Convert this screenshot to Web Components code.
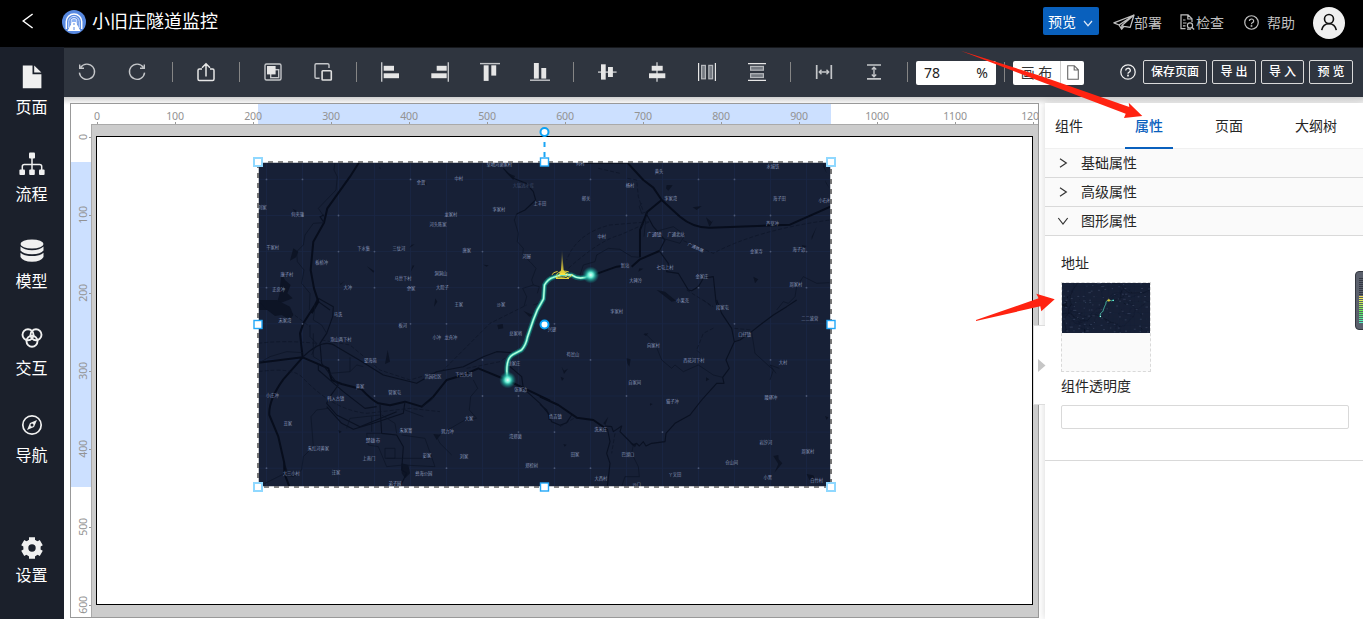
<!DOCTYPE html>
<html lang="zh-CN">
<head>
<meta charset="utf-8">
<title>小旧庄隧道监控</title>
<style>
html,body{margin:0;height:100%;overflow:hidden;background:#fff}
body{font-family:"Noto Sans","Noto Sans CJK SC",sans-serif;font-size:14px;color:#262626}
</style>
</head>
<body>
<editor-app></editor-app>
<script>
const define = (name, html) => customElements.define(name, class extends HTMLElement {
  constructor() {
    super();
    const t = document.createElement('template');
    t.innerHTML = typeof html === 'function' ? html(this) : html;
    this.attachShadow({mode: 'open'}).append(t.content.cloneNode(true));
  }
});

/* toolbar icons, drawn round the origin */
const S = 'fill="none" stroke="#c4c6c9" stroke-width="1.4"';
const r = (x, y, w, h) => `<rect x="${x}" y="${y}" width="${w}" height="${h}" fill="#e6e6e6"/>`;
const o = (x, y, w, h) => `<rect x="${x}" y="${y}" width="${w}" height="${h}" fill="#747981" stroke="#b4b7bb" stroke-width="1.2"/>`;
const l = (d, c = '#c4c6c9', w = 1.4) => `<path d="${d}" fill="none" stroke="${c}" stroke-width="${w}"/>`;
const ICONS = {
  undo: l('M-6.3 -4.6A7.6 7.6 0 1 1 -7.6 .6M-7.3 -7.4V-3.8H-3'),
  redo: l('M6.3 -4.6A7.6 7.6 0 1 0 7.6 .6M7.3 -7.4V-3.8H3'),
  share: l('M-4 -3H-6.6Q-8 -3 -8 -1.6V7Q-8 8.5 -6.6 8.5H6.6Q8 8.5 8 7V-1.6Q8 -3 6.6 -3H4M0 4.5V-8M-4 -4.2L0 -8.2L4 -4.2', '#e6e6e6', 1.5),
  front: `<rect x="-8" y="-8" width="16" height="16" rx="1.5" ${S}/><rect x="-2.3" y="-2.3" width="8" height="8" ${S}/>${r(-6, -6, 8.6, 8.4)}`,
  back: l('M-3.4 6.3H-6.8Q-8 6.3 -8 5V-7Q-8 -8.2 -6.8 -8.2H4.6Q6 -8.2 6 -7V-4') + `<rect x="-.9" y="-1.2" width="9.2" height="9.2" rx=".8" fill="none" stroke="#e0e0e0" stroke-width="1.6"/>`,
  left: l('M-8.3 -9.7V9.7') + r(-6.3, -6.2, 10.3, 4.9) + r(-6.3, 1.3, 15.3, 4.9),
  right: l('M8.3 -9.7V9.7') + r(-3.3, -6.2, 10, 4.9) + r(-8.7, 1.3, 15.4, 4.9),
  top: l('M-10 -8.4H10') + r(-6.3, -6.7, 4.9, 15.6) + r(1.3, -6.7, 4.9, 10.3),
  bottom: l('M-10 8.2H10') + r(-6.1, -9, 4.9, 15.6) + r(1.3, -4, 4.9, 10.6),
  middle: l('M-9 .1H9.6') + r(-6, -7.7, 4.7, 15.3) + r(1, -5, 4.9, 10),
  center: l('M0 -9.7V9.7') + r(-5.3, -6.2, 11, 4.9) + r(-8, 1.3, 16.3, 4.9),
  hspace: l('M-8.4 -9V9M8.4 -9V9', '#e6e6e6', 1.2) + o(-5.4, -6.6, 3.8, 13.4) + o(1.8, -6.6, 3.8, 13.4),
  vspace: l('M-9 -8.4H9M-9 8.4H9', '#e6e6e6', 1.2) + o(-6.4, -5.6, 12.8, 3.8) + o(-6.4, 1.7, 12.8, 3.8),
  width: l('M-7.3 -7V7M7.3 -7V7', '#c4c6c9', 1.7) + l('M-4.6 0H4.6M-2.5 -2.2L-4.7 0L-2.5 2.2M2.5 -2.2L4.7 0L2.5 2.2'),
  height: l('M-7 -7H7M-7 6.8H7', '#c4c6c9', 1.7) + l('M0 -4.6V4.6M-2.2 -2.5L0 -4.7L2.2 -2.5M-2.2 2.5L0 4.7L2.2 2.5')
};
define('tool-icon', el => `<style>:host{display:block;width:50px;height:24px;flex:none}svg{display:block}</style>
<svg width="50" height="24" viewBox="-25 -12 50 24">${ICONS[el.getAttribute('name')] || ''}</svg>`);
define('tool-sep', `<style>:host{display:block;width:17px;height:20px;flex:none;background:linear-gradient(#858585,#858585) 8px 0/1px 100% no-repeat}</style>`);
define('tool-button', `<style>:host{display:block;box-sizing:border-box;height:24px;border:1px solid #d9d9d9;border-radius:2px;color:#fff;font-size:12px;font-weight:500;line-height:21px;text-align:center;white-space:nowrap;margin-right:5px}</style><slot></slot>`);

define('help-icon', `<style>:host{display:block;flex:none}svg{display:block}</style>
<svg width="100%" viewBox="0 0 16 16" fill="none" stroke="currentColor" stroke-width="1.3"><circle cx="8" cy="8" r="7.2"/><path d="M5.7 6.4A2.3 2.1 0 1 1 8.9 8.3Q8 8.7 8 9.8"/><circle cx="8" cy="11.6" r=".4"/></svg>`);

define('tool-bar', `<style>
:host{display:flex;align-items:center;height:50px;background:#2f353f;box-shadow:inset 0 1px #16181c;padding-left:0}
.first{margin-left:-2px}.sep0{margin:0 0 0 2px}
.num{display:flex;align-items:center;justify-content:space-between;box-sizing:border-box;width:80px;height:24px;padding:0 8px;background:#fff;border-radius:2px;margin-top:1px;font-size:14px;color:#222}
.cv{display:flex;box-sizing:border-box;width:71px;height:24px;background:#fff;border-radius:2px;margin-top:1px;color:#333}
.cv span{width:48px;border-right:1px solid #ccc;text-align:center;line-height:23px;white-space:pre;box-sizing:border-box}
.cv svg{margin:4px auto 0}
help-icon{width:16px;margin:0 7px 0 36px;color:#eee}
</style>
<tool-icon class="first" name="undo"></tool-icon><tool-icon name="redo"></tool-icon><tool-sep class="sep0"></tool-sep>
<tool-icon name="share"></tool-icon><tool-sep></tool-sep>
<tool-icon name="front"></tool-icon><tool-icon name="back"></tool-icon><tool-sep></tool-sep>
<tool-icon name="left"></tool-icon><tool-icon name="right"></tool-icon><tool-icon name="top"></tool-icon><tool-icon name="bottom"></tool-icon><tool-sep></tool-sep>
<tool-icon name="middle"></tool-icon><tool-icon name="center"></tool-icon><tool-icon name="hspace"></tool-icon><tool-icon name="vspace"></tool-icon><tool-sep></tool-sep>
<tool-icon name="width"></tool-icon><tool-icon name="height"></tool-icon><tool-sep></tool-sep>
<div class="num"><span>78</span><span>%</span></div><tool-sep></tool-sep>
<div class="cv"><span>画 布</span><svg width="12" height="15" viewBox="0 0 12 15" fill="none" stroke="#666" stroke-width="1.1"><path d="M.7.7H7.3L11.3 4.8V14.2H.7ZM7.2 .8V5H11.2"/></svg></div>
<help-icon></help-icon>
<tool-button style="width:64px">保存页面</tool-button><tool-button style="width:44px">导 出</tool-button><tool-button style="width:43px">导 入</tool-button><tool-button style="width:44px">预 览</tool-button>`);

define('app-header', `<style>
:host{display:flex;align-items:center;height:47px;background:#000;color:#bfbfbf;box-sizing:border-box;padding-bottom:3px}
svg{display:block;flex:none}
h1{margin:0 auto 2px 6px;font-size:18px;font-weight:400;color:#fff;line-height:24px;white-space:nowrap}
.pre{display:flex;align-items:center;box-sizing:border-box;width:56px;height:28px;padding:2px 5px 0;background:#0960bd;border-radius:2px;color:#fff;margin:-2px 14px 0 0}
.pre svg{margin:3px 0 0 7px}
span{white-space:nowrap;line-height:20px}
.av{margin:2px 18px 0 18px}
</style>
<svg style="margin:-2px 0 0 22px" width="12" height="16" viewBox="0 0 12 16" fill="none" stroke="#fff" stroke-width="1.5"><path d="M10.6 1L1.2 8L10.6 15"/></svg>
<svg style="margin-left:28px" width="24" height="24" viewBox="0 0 24 24"><circle cx="12" cy="12" r="12" fill="#5889e0"/><path d="M4.3 19V11.5A7.7 7.5 0 0 1 19.7 11.5V19" fill="none" stroke="#fff" stroke-width="1.5"/><path d="M6.8 18V11.7A5.2 5.3 0 0 1 17.2 11.7V18" fill="none" stroke="#d8e5ff" stroke-width="1"/><path d="M9.2 14V9.5Q12 6.8 14.8 9.5V14Z" fill="#8fb4f5" stroke="#fff" stroke-width=".8"/><path d="M10.2 12H13.8L18.5 21H5.5Z" fill="#fff"/><path d="M12 13V15M12 17V20" stroke="#5889e0" stroke-width="1"/></svg>
<h1>小旧庄隧道监控</h1>
<div class="pre"><span>预览</span><svg width="10" height="7" viewBox="0 0 10 7" fill="none" stroke="#dce8f7" stroke-width="1.2"><path d="M1 1L5 5.7L9 1"/></svg></div>
<svg width="22" height="16" viewBox="0 0 22 16" fill="none" stroke="#bfbfbf" stroke-width="1.3" stroke-linejoin="round"><path d="M21 1L.9 8.8L6 11L8.7 15.2L11 12.4L17.2 13.4ZM21 1L6 11M21 1L8.8 11.6V15M8.8 11.6L11 12.4"/></svg>
<span style="margin:1px 0 0 -1px">部署</span>
<svg style="margin-left:18px" width="15" height="16" viewBox="0 0 15 16" fill="none" stroke="#bfbfbf" stroke-width="1.2"><path d="M5.5 14.6H1V.8H8L12 4.8V8M7.8 1V5H12M3 6H5.5M3 9H6.5M3 11.8H5.5"/><circle cx="10" cy="11.4" r="2.6"/><path d="M11.8 13.2L14.2 15.5M7 15.2H11"/></svg>
<span style="margin:1px 0 0 1px">检查</span>
<help-icon style="width:15px;margin-left:20px"></help-icon>
<span style="margin:1px 0 0 8px">帮助</span>
<svg class="av" width="32" height="32" viewBox="0 0 32 32"><circle cx="16" cy="16" r="16" fill="#f0f0f0"/><g fill="none" stroke="#111" stroke-width="1.6"><circle cx="16" cy="12" r="4.5"/><path d="M8.7 23.2Q10 16.7 16 16.7T23.3 23.2"/></g></svg>`);

const NAV = {
  page: '<path d="M4.8 2.4H14.5V11.2H23.4V25.2H4.8Z" fill="#f0f0f0"/><path d="M16.2 2.4L23.4 9.6H16.2Z" fill="#f0f0f0"/>',
  flow: '<path d="M14 6V22M4.3 21V16.5Q4.3 14.4 6.4 14.4H21.6Q23.7 14.4 23.7 16.5V21" fill="none" stroke="#f0f0f0" stroke-width="1.5"/><g fill="#f0f0f0"><rect x="11" y="2.4" width="6" height="6" rx="1"/><rect x="1.4" y="19.5" width="5.6" height="5.6" rx="1"/><rect x="11.2" y="19.5" width="5.6" height="5.6" rx="1"/><rect x="21" y="19.5" width="5.6" height="5.6" rx="1"/></g>',
  data: '<g fill="#f0f0f0"><ellipse cx="14" cy="7" rx="11.5" ry="4.6"/><path d="M2.5 9.5Q6 13.2 14 13.2T25.5 9.5V13.5Q23 17.2 14 17.2T2.5 13.5Z"/><path d="M2.5 15.8Q6 19 14 19T25.5 15.8V20Q23 24.7 14 24.7T2.5 20Z"/></g>',
  inter: '<g fill="none" stroke="#f0f0f0" stroke-width="1.9"><circle cx="10" cy="10.7" r="5.5"/><circle cx="18" cy="10.7" r="5.5"/><circle cx="14" cy="17.3" r="5.5"/></g>',
  nav: '<circle cx="14" cy="14" r="9.2" fill="none" stroke="#f0f0f0" stroke-width="1.7"/><path d="M19 9L16 16L9 19L12 12Z" fill="#f0f0f0"/><circle cx="14" cy="14" r="1.5" fill="#1b202b"/>',
  set: '<circle cx="14" cy="14" r="6.2" fill="none" stroke="#f0f0f0" stroke-width="5"/><g stroke="#f0f0f0" stroke-width="6"><path d="M14 3.3V24.7" stroke-dasharray="4.5 12.4"/><path d="M14 3.3V24.7" stroke-dasharray="4.5 12.4" transform="rotate(60 14 14)"/><path d="M14 3.3V24.7" stroke-dasharray="4.5 12.4" transform="rotate(120 14 14)"/></g>'
};
define('nav-item', el => `<style>:host{display:flex;flex-direction:column;align-items:center;gap:4px;color:#fff;font-size:16px;line-height:24px}svg{display:block}</style>
<svg width="28" height="28" viewBox="0 0 28 28">${NAV[el.getAttribute('icon')]}</svg><span><slot></slot></span>`);
define('side-nav', `<style>:host{display:flex;flex-direction:column;gap:31px;box-sizing:border-box;width:64px;padding:16px 1px 32px 0;background:#1b202b}
.set{margin-top:auto;gap:1px}</style>
<nav-item icon="page">页面</nav-item><nav-item icon="flow">流程</nav-item><nav-item icon="data">模型</nav-item><nav-item icon="inter">交互</nav-item><nav-item icon="nav">导航</nav-item><nav-item class="set" icon="set">设置</nav-item>`);

/* map: four quadrants, each in its own threefold coordinate space */
const Q = [
 {x:250,y:120,
  thick:'M328 126L300 170L232 265L222 308L190 365L182 450L192 505L205 545L185 580',
  mid:'M222 308L210 290L222 285M205 545L240 570M760 145L790 175L828 190L850 215L857 240L825 270L800 282',
  thin:'M255 126L252 150L262 170L258 210L205 265L222 290M222 308L190 310L165 345L160 375L140 395L142 425L162 450L155 490L180 520L178 570M800 282L793 300L805 340L802 365L820 385L818 405L840 425L858 445L845 480L850 495M850 495L835 500L818 505L830 530L822 560M850 495L868 500L862 520M882 545L850 555',
  blob:'M130 385L145 395L138 412L120 422ZM95 460L105 480L122 495L112 520L128 535L90 550L125 570H25V545L80 550L88 525L90 500ZM505 180L525 182L530 196L518 192ZM485 374L494 373L478 384ZM488 436L493 437L482 455ZM350 438L373 453L370 458ZM265 480L272 492L284 482L272 495ZM700 434L716 436L710 440ZM760 145L775 160L795 168L790 180L770 160ZM556 535L562 545L552 560ZM388 142L392 144L390 148ZM128 266L140 272L136 278Z',
  t:'草地河谢家村,748,135|余贺,513,187|中村,626,175|大猛达水库,820,196,d|上丰田,870,250|李家村,747,268|龙家村,603,285|河头陈家,564,315|刘家,37,263|何夹蒲,143,285|千家村,68,383|下水集,341,387|三仗河,447,387|唐家,650,393|河屋,830,411|板桥冲,215,427|康子村,111,463|正房冲,86,508|马世下村,459,476|余家,483,507|大冲,293,504|洞洞山,573,462|大院子,577,504|王家,626,554|沙家,753,554'},
 {x:540,y:120,
  thick:'M262 128L310 180L340 203L365 240L420 290Q460 324 510 323L750 314L875 258M365 240L322 275L300 330V412M165 463L230 440L262 436M275 440L300 418L358 393M130 128H262',
  mid:'M358 393L375 360L340 320L318 280M358 393L385 430L380 455L415 460L445 510L455 512L475 500L490 475L520 470L528 545L534 570',
  thin:'M300 412L275 410L240 388L205 385L170 405L165 425L130 435L120 465M322 275L305 280L298 260L305 250M318 290L312 350M345 335L400 320L435 345L420 370L350 350M710 570L730 545L745 550L765 530L770 500L790 470L830 490L868 488',
  dash:'M85 445Q180 360 240 345L330 305L210 315Q110 340 80 420M262 175L290 180L295 230L310 275M430 362L520 400Q650 330 870 300M440 510L520 560M175 145L240 160',
  blob:'M380 195L398 196L385 212L378 205ZM458 262L485 258L470 270ZM498 292L515 306L520 300L512 315L508 320ZM350 510L375 515L408 542L395 545ZM785 375L800 378L790 385ZM855 180L868 205L858 190ZM298 445L310 446L295 455ZM640 470L655 478L645 490ZM850 130L860 160L850 140ZM830 320L815 360L815 350Z',
  t:'何村,121,130|黄头,357,156|水城铁,699,141|杨村,270,198|邮关,138,237|李家湾,392,235|海子田,718,235|小石村,855,243|芦草冲,697,312|中村,185,351|广通镇,343,345,b|广通北站,408,344|广通铁路,467,383,r|金家寺,649,396|海子边,777,390|新站,255,437|七屯上村,375,443|大碑冷,287,482|金家庄,486,471|周家村,768,495|小果克,428,541|段家屯,547,564'},
 {x:250,y:300,
  thick:'M205 -5L195 15L160 70L150 100L158 172M25 188L158 172L200 190L235 205L245 240L275 252L335 268Q365 300 385 310L420 316L465 305L515 320L550 290L590 240L640 225L685 205L770 240L900 302M158 172L100 238Q55 300 58 345L85 410L103 490L105 525L118 560',
  mid:'M158 172Q220 110 260 140Q330 180 400 225L500 250L560 215L640 200L700 170L740 155L785 158M205 -5L250 20L248 50L230 100L210 130L215 190L250 235L265 255L240 290L230 310L260 345L330 380L440 335M205 190L205 210L280 275L345 325L380 320M230 320L275 370L310 388L370 370L460 340L465 305M390 315L395 400L440 405L460 440L455 510L470 520L450 560M780 200L815 230L820 265L870 310L895 340L898 360',
  thin:'M25 190L60 170L110 155L158 158M195 15L190 60L215 75L230 100M180 75V110L200 130L185 165M190 100V170L215 185M240 220L300 215V172M300 215L320 195L340 200M235 325L200 330L183 350L190 440L160 470L155 510L130 530L95 525L25 560M670 240L683 265L662 290L658 330L680 355L645 360L610 380L560 410L570 430L605 465M395 400H350L355 435L385 440L410 500L460 495L555 500L525 415L455 405M405 445H435V475H405ZM410 475H540M290 385L300 355L390 345M365 350V395M395 345L435 370L440 400M515 320L545 300L550 290M465 330L520 350',
  dash:'M25 130Q100 120 200 130M25 215Q130 200 160 235Q250 330 350 340L480 325L570 335M215 120L300 135L390 210L480 240L580 210L720 70L830 15M650 205L750 185L800 150M120 35L180 80',
  blob:'M25 0H80L120 20L130 45L120 60L95 45L75 48L45 25ZM413 150L420 185L405 192ZM742 75L758 72L760 85L745 88ZM820 32L848 45L838 50ZM550 402L572 404L560 420ZM455 490L475 495L480 520L465 535L455 520ZM265 390L275 395L268 400ZM100 480L112 510L100 525Z',
  t:'宋家湾,105,61|马洗,264,43|板河,458,77|泡山两下村,273,120|小冲,560,114|龙舟冲,603,112|总家哨,797,102|望海苑,361,183|洪园社区,549,231|下凹头河,641,225|徐家庄,792,192|张家边,812,270|黄家,330,261|管家屯,434,278|小庄冲,67,288|韩入古镇,257,295|丑家,113,370|朱家箐,468,391|努力冲,592,394|大家,657,357|湾郑菌,796,411|朱红河黄家,205,446|楚雄市,369,421,b|上南门,357,477|彭家,531,468|刘家,642,471|郑棕树,845,496|大三小村,124,522|汪家,258,519|彝海公园,521,521|弟子园,435,552'},
 {x:540,y:300,
  thick:'M0 290L55 315L110 353L160 360L203 390',
  mid:'M0 313L20 330L35 365L60 376L80 368L95 345M203 390L210 425L200 460L210 490L202 560M195 378L215 380L220 395L245 378L240 395L280 435L290 430L298 438L310 425L318 438L335 430L375 425L378 400L405 370L450 345L485 300L530 250L552 250L548 232L568 205L558 180L583 125L575 85L545 40L530 0M583 125L600 120L635 95L660 75L700 45L740 20L770 0',
  thin:'M280 435L275 460L295 500L298 530L255 530L245 560M635 95L645 160L700 210L690 240M708 220L690 195L718 205M315 100L345 130L365 180L395 205L405 195L430 215L475 195L520 225L548 232',
  dash:'M480 160L470 150L490 100L525 82M60 380L110 350M225 400L215 460M583 85L635 90M490 0L515 20',
  blob:'M65 200L72 212L84 206L72 222ZM260 175L272 178L268 200L262 190ZM700 468L715 465L716 478L727 490L703 518L715 492ZM800 522L820 526L825 538L808 540ZM855 348L865 352L860 360ZM190 370L205 350L196 375ZM498 232L508 238L498 244ZM270 430L290 432L285 442ZM325 100L318 108L310 102ZM62 230L72 235L66 243ZM330 310L338 312L330 317ZM70 432L80 434L74 440Z',
  t:'李家村,230,35|兴建,36,89|苟岔山,99,163|向家村,340,137|口仔镇,614,105|二二波营,809,55|西花河下村,462,183|大村,729,189|自家间,284,247|猫子冲,397,305|腰驿冲,693,293|色吉镇,46,350|洗米庄,182,390|田家,105,464|巴湖口,264,464|仓山间,575,487|丫叉田,405,525|大西村,183,537|沙口,290,554|岩汐河,678,428|周家村,804,456|小黑,683,534|白竹村,830,541'}
];
const label = s => {
  const [t, x, y, k] = s.split(',');
  return `<text x="${x}" y="${+y + 4.5}" ${k === 'd' ? 'fill="#3d4a68"' : ''} ${k === 'b' ? 'font-size="14.5"' : ''} ${k === 'r' ? `transform="rotate(24 ${x} ${y})"` : ''}>${t}</text>`;
};
const dash = s => {
  const [t, x, y] = s.split(',');
  return `M${x - t.length * 6} ${y}h${t.length * 12}`;
};
function mapSvg(labels) {
  let grid = '', dots = '';
  for (let i = 0; i < 16; i++) grid += `M${266.5 + i * 36} 162V487`;
  for (let j = 0; j < 9; j++) grid += `M258 ${179.4 + j * 36.1}H831`;
  for (let i = 0; i < 16; i++) for (let j = 0; j < 9; j++) if ((i * 5 + j * 3) % 4 < 2 && (i + 2 * j) % 3 < 2) dots += `<circle cx="${266.5 + i * 36}" cy="${179.4 + j * 36.1}" r=".9"/>`;
  const roads = Q.map(q => `<g transform="translate(${q.x} ${q.y}) scale(.33333)"><path d="${q.blob}" fill="#0d1425"/><g fill="none" stroke="#070d1c" stroke-linejoin="round"><path d="${q.thick}" stroke-width="6"/><path d="${q.mid}" stroke-width="3.3" stroke="#0a1122"/><path d="${q.thin}" stroke-width="2.2" stroke="#0d1527"/><path d="${q.dash || ''}" stroke-width="2" stroke="#0c1425" stroke-dasharray="12 6"/></g></g>`).join('');
  const text = Q.map(q => `<g transform="translate(${q.x} ${q.y}) scale(.33333)" font-size="12.8" fill="#8c99bb" text-anchor="middle">${labels ? q.t.split('|').map(label).join('') : `<path d="${q.t.split('|').map(dash).join('')}" stroke="#46526f" stroke-width="10"/>`}</g>`).join('');
  const route = 'M507.7 380Q506 371 507.5 363Q508.5 357 513 354.5L521.5 350Q526 345 527.5 337L533.3 320L537.3 310L543.5 299L544.5 285Q548 279 553 277.5L561.7 274.5L571.7 275Q580 281 590.7 275';
  return `<svg width="100%" height="100%" viewBox="258 162 573 325" preserveAspectRatio="none">
<defs><radialGradient id="g"><stop offset="0" stop-color="#e8fff8"/><stop offset=".3" stop-color="#6ef0d6"/><stop offset=".55" stop-color="#25b8a6" stop-opacity=".75"/><stop offset="1" stop-color="#128080" stop-opacity="0"/></radialGradient>
<linearGradient id="y" x1="0" y1="0" x2="0" y2="1"><stop offset="0" stop-color="#ffe53b" stop-opacity="0"/><stop offset="1" stop-color="#ffe53b"/></linearGradient></defs>
<rect x="258" y="162" width="573" height="325" fill="#172036"/>
<path d="${grid}" stroke="#1b2745" stroke-width=".8"/>${roads}<g fill="#4c5874">${dots}</g>${text}
<g fill="none" stroke-linejoin="round" stroke-linecap="round"><path d="${route}" stroke="#137d7c" stroke-opacity=".6" stroke-width="5"/><path d="${route}" stroke="#35c4a8" stroke-width="2.6"/><path d="${route}" stroke="#bcffe0" stroke-width="1.3"/></g>
<circle cx="507.7" cy="380" r="8.5" fill="url(#g)"/><circle cx="590.7" cy="275" r="8.5" fill="url(#g)"/>
<path d="M562 249L563.6 270L566 275H559L561 270Z" fill="url(#y)"/><g fill="none" stroke="#e5d23a" stroke-width="${labels ? 1 : 4}"><ellipse cx="562.3" cy="274.6" rx="10" ry="3.6" stroke-dasharray="7 4"/><ellipse cx="562.3" cy="274.6" rx="5.5" ry="2.6"/><path d="M556 278.5H569M559.5 272H565.5"/></g>
</svg>`;
}
define('map-picture', el => `<style>:host{display:block}svg{display:block}text{font-family:"Noto Sans CJK SC",sans-serif}</style>${mapSvg(!el.hasAttribute('thumb'))}`);

define('selection-frame', () => {
  const sq = (x, y, c) => `<rect x="${x - 4}" y="${y - 4}" width="8" height="8" fill="#fff" stroke="${c}" stroke-width="${c === '#8fd8ff' ? 2 : 1.4}"/>`;
  const c = '#8fd8ff', m = '#22a7f8';
  return `<style>:host{display:block}svg{display:block;overflow:visible}</style><svg width="573" height="325" viewBox="0 0 573 325">
<rect x="0" y="0" width="573" height="325" fill="none" stroke="#fff" stroke-width="1.5"/><rect x="0" y="0" width="573" height="325" fill="none" stroke="#5f5f5f" stroke-width="1.7" stroke-dasharray="5 5"/>
<path d="M286.5 -26V0" stroke="#1aa5f5" stroke-width="2" stroke-dasharray="5 5" stroke-dashoffset="-6"/>
${sq(0, 0, c)}${sq(573, 0, c)}${sq(0, 325, c)}${sq(573, 325, c)}${sq(286.5, 0, m)}${sq(286.5, 325, m)}${sq(0, 162.5, m)}${sq(573, 162.5, m)}
<g fill="#fff" stroke="#0aa1f5" stroke-width="2"><circle cx="286.5" cy="-30" r="4"/><circle cx="286.5" cy="162.5" r="4"/></g></svg>`;
});

define('ruler-bar', el => {
  const v = el.hasAttribute('vertical'), n = +el.getAttribute('count');
  const cells = Array.from({length: n}, (_, i) => `<div><span>${i * 100}</span></div>`).join('');
  return `<style>:host{display:flex;overflow:hidden;font:10.6px "Noto Sans",sans-serif;color:#939393;letter-spacing:-.15px}
div{flex:none;display:flex;align-items:center;justify-content:center;box-sizing:border-box;background:linear-gradient(#999,#999) no-repeat}
${v ? `:host{flex-direction:column;background:linear-gradient(#cce0ff,#cce0ff) 0 38px/20px 325px no-repeat #fff}
div{height:78px;width:20px;padding-left:4px;background-size:2px 1px;background-position:18px 39px}div:first-of-type{margin-top:-26px}span{writing-mode:vertical-rl;transform:rotate(180deg);line-height:14px}`
: `:host{background:linear-gradient(#cce0ff,#cce0ff) 187px 0/573px 20px no-repeat #fff}
div{width:78px;height:20px;padding-top:4px;background-size:1px 2px;background-position:39px 18px}div:first-of-type{margin-left:-13px}span{line-height:14px}`}</style>${cells}`;
});

define('design-canvas', `<style>
:host{display:grid;box-sizing:border-box;width:969px;height:515px;border:1px solid #999;grid-template:20px 1fr/20px 1fr;background:#fff}
.top{grid-column:1/3;min-width:0}
ruler-bar{min-height:0}
.stage{background:#ccc;border:1px solid #aaa;border-width:1px 0 0 1px;padding:11px 0 0 4px}
.board{position:relative;box-sizing:border-box;width:937px;height:469px;background:#fff;border:1px solid #000}
map-picture,selection-frame{position:absolute;left:161px;top:25px;width:573px;height:325px}
</style>
<ruler-bar class="top" count="13"></ruler-bar><ruler-bar vertical count="7"></ruler-bar>
<div class="stage"><div class="board"><map-picture></map-picture><selection-frame></selection-frame></div></div>`);

define('panel-tab', `<style>:host{display:block;box-sizing:border-box;height:46px;padding:0 10px;line-height:46px;white-space:nowrap}
:host([active]){color:#0960bd;font-weight:500;border-bottom:2px solid #0960bd}</style><slot></slot>`);
define('panel-section', el => `<style>:host{display:flex;align-items:center;box-sizing:border-box;height:29px;border-bottom:1px solid #d9d9d9;background:#fafafa;padding-left:12px;line-height:20px}svg{display:block;margin-right:12px}</style>
<svg width="12" height="12" viewBox="0 0 12 12" fill="none" stroke="#333" stroke-width="1.2"><path d="${el.hasAttribute('open') ? 'M1.3 3L6 9L10.7 3' : 'M3 1.8L9.3 6L3 10.2'}"/></svg><span><slot></slot></span>`);
define('prop-panel', `<style>
:host{display:block;background:#fff;box-shadow:0 0 8px rgba(0,0,0,.17)}
.tabs{display:flex;gap:32px;height:46px;box-sizing:border-box;border-bottom:1px solid #f0f0f0}
.body{display:flex;flex-direction:column;box-sizing:border-box;height:225px;padding:17px 14px 0 16px;border-bottom:1px solid #d9d9d9}
label{line-height:20px;display:block}
.up{box-sizing:border-box;width:90px;height:90px;border:1px dashed #d9d9d9;background:#fafafa;margin:9px 0 4px}
map-picture{width:88px;height:50px}
.in{box-sizing:border-box;height:24px;border:1px solid #d9d9d9;border-radius:2px;margin-top:9px}
</style>
<div class="tabs"><panel-tab>组件</panel-tab><panel-tab active>属性</panel-tab><panel-tab>页面</panel-tab><panel-tab>大纲树</panel-tab></div>
<panel-section>基础属性</panel-section><panel-section>高级属性</panel-section><panel-section open>图形属性</panel-section>
<div class="body"><label>地址</label><div class="up"><map-picture thumb></map-picture></div><label>组件透明度</label><div class="in"></div></div>`);

define('level-meter', () => {
  let b = '';
  for (let i = 0; i < 23; i++) b += `<path d="M4 ${7.5 + i * 2}H8" stroke="${i < 9 ? '#343943' : `hsl(${52 + (i - 9) * 8.5} 85% 64%)`}"/>`;
  return `<style>:host{display:block}svg{display:block}</style><svg width="8" height="60" viewBox="0 0 8 60"><path d="M8 .5H4Q.5 .5 .5 4V55Q.5 58.5 4 58.5H8" fill="#5b606c" stroke="#33373f"/>${b}</svg>`;
});
define('panel-toggle', `<style>:host{display:flex;align-items:center;box-sizing:border-box;width:12px;height:80px;background:#fff;border:1px solid #ddd;border-right:0;padding-left:4px}svg{display:block;overflow:visible;flex:none}</style><svg width="8" height="13" viewBox="0 0 8 13"><path d="M0 0L7.5 6.5L0 13Z" fill="#c6c6c6"/></svg>`);
define('red-arrows', `<style>:host{display:block;pointer-events:none}svg{display:block}</style><svg width="1363" height="619" viewBox="0 0 1363 619" fill="#ff2311"><path d="M960.7 50.7L1040 75.8L1129.3 107L1128.7 102.7L1142.3 116L1124 118L1125.7 113.7L1040 81.2Z"/><path d="M976 320L1038.7 298.3L1036.3 293.7L1054.7 299.3L1041.3 311.3L1040.3 306.3L976 321Z"/></svg>`);

define('editor-app', `<style>
:host{display:grid;position:relative;width:1363px;height:619px;grid-template:47px 50px 1fr/64px 1fr;overflow:hidden}
app-header{grid-column:1/3}side-nav{grid-row:2/4}
main{display:flex;box-sizing:border-box;padding:6px 0 0 6px;background:linear-gradient(#d0d0d0,#f5f5f5 6px,#fff 8px)}
prop-panel{flex:1;margin-left:6px}
panel-toggle{position:absolute;left:1033px;top:325px}
level-meter{position:absolute;right:0;top:271px}
red-arrows{position:absolute;left:0;top:0}
</style>
<app-header></app-header><side-nav></side-nav><tool-bar></tool-bar>
<main><design-canvas></design-canvas><prop-panel></prop-panel></main>
<panel-toggle></panel-toggle><level-meter></level-meter><red-arrows></red-arrows>`);
</script>
</body>
</html>
